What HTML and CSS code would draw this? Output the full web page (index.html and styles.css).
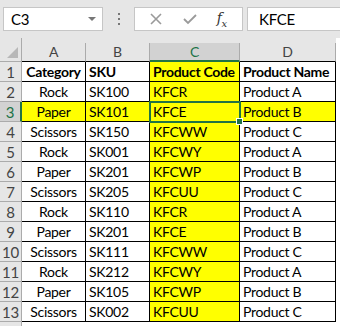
FILE: index.html
```html
<!DOCTYPE html>
<html lang="en">
<head>
    <meta charset="UTF-8">
    <title>Sheet</title>
    <link rel="stylesheet" href="styles.css">
</head>
<body>
    <div class="bar">
        <div class="name-box">
            <span>C3</span>
            <span class="arrow"></span>
        </div>
        <div class="dots"><i></i><i></i><i></i></div>
        <div class="fx-box">
            <svg width="16" height="16" viewBox="0 0 16 16"><path d="M3 3 L13 13 M13 3 L3 13" stroke="#9a9a9a" stroke-width="1.6" fill="none"/></svg>
            <svg width="16" height="16" viewBox="0 0 16 16"><path d="M2 8 L6 12 L14 4" stroke="#9a9a9a" stroke-width="1.8" fill="none"/></svg>
            <span class="fx">f<sub>x</sub></span>
        </div>
        <div class="formula">KFCE</div>
    </div>

    <div class="sheet">
        <div class="corner"><span class="tri"></span></div>
        <div class="col-hd">A</div>
        <div class="col-hd">B</div>
        <div class="col-hd active">C</div>
        <div class="col-hd">D</div>
        <div class="fill"></div>

        <div class="row-hd">1</div>
        <div class="cell center bold">Category</div>
        <div class="cell bold">SKU</div>
        <div class="cell yellow bold">Product Code</div>
        <div class="cell bold">Product Name</div>
        <div class="fill"></div>

        <div class="row-hd">2</div>
        <div class="cell center">Rock</div>
        <div class="cell">SK100</div>
        <div class="cell yellow">KFCR</div>
        <div class="cell">Product A</div>
        <div class="fill"></div>

        <div class="row-hd active">3</div>
        <div class="cell center yellow">Paper</div>
        <div class="cell yellow">SK101</div>
        <div class="cell yellow selected">KFCE<span class="handle"></span></div>
        <div class="cell yellow">Product B</div>
        <div class="fill"></div>

        <div class="row-hd">4</div>
        <div class="cell center">Scissors</div>
        <div class="cell">SK150</div>
        <div class="cell yellow">KFCWW</div>
        <div class="cell">Product C</div>
        <div class="fill"></div>

        <div class="row-hd">5</div>
        <div class="cell center">Rock</div>
        <div class="cell">SK001</div>
        <div class="cell yellow">KFCWY</div>
        <div class="cell">Product A</div>
        <div class="fill"></div>

        <div class="row-hd">6</div>
        <div class="cell center">Paper</div>
        <div class="cell">SK201</div>
        <div class="cell yellow">KFCWP</div>
        <div class="cell">Product B</div>
        <div class="fill"></div>

        <div class="row-hd">7</div>
        <div class="cell center">Scissors</div>
        <div class="cell">SK205</div>
        <div class="cell yellow">KFCUU</div>
        <div class="cell">Product C</div>
        <div class="fill"></div>

        <div class="row-hd">8</div>
        <div class="cell center">Rock</div>
        <div class="cell">SK110</div>
        <div class="cell yellow">KFCR</div>
        <div class="cell">Product A</div>
        <div class="fill"></div>

        <div class="row-hd">9</div>
        <div class="cell center">Paper</div>
        <div class="cell">SK201</div>
        <div class="cell yellow">KFCE</div>
        <div class="cell">Product B</div>
        <div class="fill"></div>

        <div class="row-hd">10</div>
        <div class="cell center">Scissors</div>
        <div class="cell">SK111</div>
        <div class="cell yellow">KFCWW</div>
        <div class="cell">Product C</div>
        <div class="fill"></div>

        <div class="row-hd">11</div>
        <div class="cell center">Rock</div>
        <div class="cell">SK212</div>
        <div class="cell yellow">KFCWY</div>
        <div class="cell">Product A</div>
        <div class="fill"></div>

        <div class="row-hd">12</div>
        <div class="cell center">Paper</div>
        <div class="cell">SK105</div>
        <div class="cell yellow">KFCWP</div>
        <div class="cell">Product B</div>
        <div class="fill"></div>

        <div class="row-hd">13</div>
        <div class="cell center">Scissors</div>
        <div class="cell">SK002</div>
        <div class="cell yellow">KFCUU</div>
        <div class="cell">Product C</div>
        <div class="fill"></div>

        <div class="row-hd tail"></div>
        <div class="blank"></div>
        <div class="blank"></div>
        <div class="blank"></div>
        <div class="blank"></div>
        <div class="blank"></div>
    </div>
</body>
</html>
```

FILE: styles.css
```css
body {
    margin: 0;
    width: 340px;
    height: 326px;
    overflow: hidden;
    background-color: #fff;
    font-family: "Lato", "Liberation Sans", sans-serif;
    font-size: 14px;
    letter-spacing: -0.3px;
    color: #000;
}

.bar {
    height: 38px;
    background-color: #e6e6e6;
    display: flex;
    align-items: flex-start;
    padding-top: 7px;
    box-sizing: border-box;
}

.name-box {
    margin-left: 3px;
    width: 100px;
    height: 24px;
    background-color: #fff;
    border: 1px solid #c6c6c6;
    box-sizing: border-box;
    display: flex;
    align-items: center;
    justify-content: space-between;
    padding: 0 6px 0 7px;
    font-size: 15px;
}

.arrow {
    width: 0;
    height: 0;
    border-left: 4px solid transparent;
    border-right: 4px solid transparent;
    border-top: 4px solid #777;
}

.dots {
    width: 31px;
    height: 24px;
    display: flex;
    flex-direction: column;
    align-items: center;
    justify-content: center;
    gap: 3px;
}

.dots i {
    width: 2px;
    height: 2px;
    background-color: #777;
}

.fx-box {
    width: 109px;
    height: 24px;
    background-color: #fff;
    border: 1px solid #c6c6c6;
    box-sizing: border-box;
    display: flex;
    align-items: center;
    justify-content: space-around;
    padding: 0 6px 0 4px;
}

.fx {
    font-family: "DejaVu Serif", serif;
    font-style: italic;
    font-size: 14px;
    color: #333;
}

.fx sub {
    font-size: 10px;
}

.formula {
    margin-left: 4px;
    flex: 1;
    height: 24px;
    background-color: #fff;
    border: 1px solid #c6c6c6;
    border-right: none;
    box-sizing: border-box;
    padding-left: 11px;
    line-height: 22px;
    font-size: 15px;
}

.sheet {
    display: grid;
    grid-template-columns: 22px 64px 64px 90px 96px 4px;
    grid-template-rows: 24px repeat(13, 20px) 4px;
    background-color: #e6e6e6;
}

.corner {
    border-right: 1px solid #ababab;
    border-bottom: 1px solid #ababab;
    position: relative;
}

.tri {
    position: absolute;
    right: 3px;
    bottom: 3px;
    width: 0;
    height: 0;
    border-left: 11px solid transparent;
    border-bottom: 11px solid #b8b8b8;
}

.col-hd {
    margin-top: 5px;
    border-right: 1px solid #ababab;
    border-bottom: 1px solid #000;
    text-align: center;
    line-height: 18px;
    color: #444;
    font-size: 14px;
}

.col-hd.active {
    background-color: #d2d2d2;
    color: #217346;
    border-bottom: 2px solid #217346;
    line-height: 17px;
}

.row-hd {
    border-right: 1px solid #ababab;
    border-bottom: 1px solid #ababab;
    text-align: center;
    line-height: 20px;
    color: #444;
    font-size: 15px;
}

.row-hd.active {
    background-color: #d2d2d2;
    color: #217346;
    border-right: 2px solid #217346;
}

.row-hd.tail {
    border-bottom: none;
}

.cell {
    background-color: #fff;
    border-right: 1px solid #000;
    border-bottom: 1px solid #000;
    padding-left: 3px;
    line-height: 20px;
    white-space: nowrap;
    overflow: hidden;
}

.center {
    text-align: center;
    padding-left: 0;
}

.bold {
    font-weight: bold;
}

.yellow {
    background-color: #ffff00;
}

.selected {
    position: relative;
    overflow: visible;
    outline: 2px solid #217346;
    outline-offset: -1px;
}

.handle {
    position: absolute;
    right: -4px;
    bottom: -4px;
    width: 5px;
    height: 5px;
    background-color: #217346;
    border: 1px solid #fff;
}

.fill {
    background-color: #fff;
}

.blank {
    background-color: #fff;
}
```
